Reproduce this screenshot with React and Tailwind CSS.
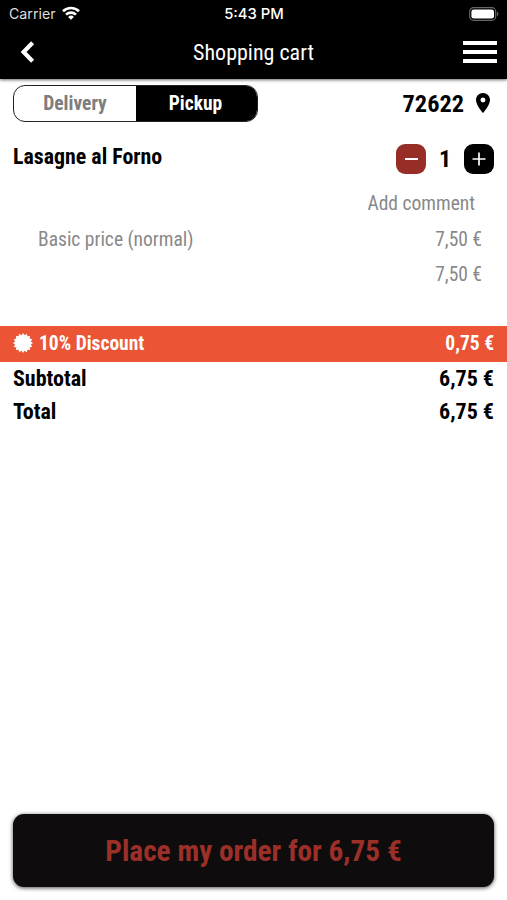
import React from 'react';

const CartScreen = () => {
    return (
        <div className="w-full h-screen bg-white flex flex-col overflow-hidden text-black font-['Roboto_Condensed','Roboto',sans-serif] font-stretch-condensed leading-none">
            {/* HEADER */}
            <header className="h-[79px] shrink-0 bg-black text-white shadow-[0_1px_3px_rgba(0,0,0,0.6)]">
                <StatusBar />
                <div className="h-[48px] grid grid-cols-[1fr_auto_1fr] items-center pl-[20px] pr-[10px]">
                    <svg width="15" height="22" viewBox="0 0 15 22" fill="none" stroke="currentColor" strokeWidth="4.2">
                        <path d="M12.6 1.8 L3.6 11 L12.6 20.2" />
                    </svg>
                    <h1 className="text-[22px] pt-px font-normal -translate-x-[5px]">Shopping cart</h1>
                    <div className="justify-self-end w-[34px] h-[22px] flex flex-col justify-between">
                        <span className="h-[3.6px] bg-white" />
                        <span className="h-[3.6px] bg-white" />
                        <span className="h-[3.6px] bg-white" />
                    </div>
                </div>
            </header>

            {/* ORDER TYPE */}
            <div className="mt-[6px] h-[37px] shrink-0 px-[13px] flex items-center justify-between">
                <div className="w-[245px] h-[37px] flex rounded-[12px] border border-[#222] overflow-hidden text-[19.5px] font-bold">
                    <button className="w-[122px] text-[#7d7d7d]">Delivery</button>
                    <button className="flex-1 pr-[2px] bg-black text-white">Pickup</button>
                </div>
                <div className="flex items-center gap-[12px] pr-[4px]">
                    <span className="pt-[2px] text-[24.3px] font-bold">72622</span>
                    <svg width="14" height="20" viewBox="5 2 14 20" fill="currentColor">
                        <path d="M12 2C8.13 2 5 5.13 5 9c0 5.25 7 13 7 13s7-7.75 7-13c0-3.87-3.13-7-7-7zm0 9.5a2.5 2.5 0 0 1 0-5 2.5 2.5 0 0 1 0 5z" />
                    </svg>
                </div>
            </div>

            {/* CART ITEM */}
            <section className="h-[204px] shrink-0 px-[13px] pt-[21px] text-[19.5px] text-[#888]">
                <div className="h-[31px] flex items-center justify-between text-black font-bold">
                    <h2 className="text-[21.9px] pb-[3px]">Lasagne al Forno</h2>
                    <div className="flex items-center">
                        <button className="size-[30px] rounded-[9px] bg-[#962d26] flex items-center justify-center">
                            <span className="w-[13px] h-[2px] bg-white" />
                        </button>
                        <span className="w-[38px] text-center text-[24px]">1</span>
                        <button className="size-[30px] rounded-[9px] bg-black text-white flex items-center justify-center">
                            <svg width="14" height="14" viewBox="0 0 14 14" stroke="currentColor" strokeWidth="1.7">
                                <path d="M7 0.5V13.5M0.5 7H13.5" />
                            </svg>
                        </button>
                    </div>
                </div>
                <div className="mt-[12px] h-[35px] flex items-center justify-end pr-[19px]">Add comment</div>
                <div className="h-[37px] flex items-center justify-between pl-[25px] pr-[12px]">
                    <span>Basic price (normal)</span>
                    <span>7,50 €</span>
                </div>
                <div className="h-[34px] flex items-center justify-end pr-[12px]">7,50 €</div>
            </section>

            {/* SUMMARY */}
            <div className="h-[36px] shrink-0 bg-[#eb5535] text-white px-[13px] flex items-center justify-between text-[19.5px] font-bold">
                <span className="flex items-center gap-[6px]">
                    <span className="pb-[2px]"><Seal /></span>
                    10% Discount
                </span>
                <span>0,75 €</span>
            </div>
            <SummaryRow label="Subtotal" value="6,75 €" />
            <SummaryRow label="Total" value="6,75 €" />

            <button className="mt-auto mb-[13px] mx-[13px] h-[73px] pt-[2px] shrink-0 rounded-[11px] bg-[#0e0c0d] text-[#9c3029] text-[29.3px] font-bold shadow-[0_1px_4px_rgba(0,0,0,0.7)]">
                Place my order for 6,75 €
            </button>
        </div>
    );
};

const StatusBar = () => (
    <div className="h-[28px] grid grid-cols-[1fr_auto_1fr] items-center pl-[9px] pr-[8px] font-['Inter',sans-serif] font-stretch-normal text-[14px]">
        <div className="flex items-center gap-[6px]">
            <span className="text-[14.2px] text-[#ddd]">Carrier</span>
            <svg className="-mt-[2px]" width="18" height="14" viewBox="0 0 18 14" fill="none" stroke="currentColor" strokeWidth="2.6">
                <path d="M1 5.2a11.6 11.6 0 0 1 16 0" />
                <path d="M4 8.6a7.4 7.4 0 0 1 10 0" />
                <path d="M9 13.8L6.1 10.9a4.2 4.2 0 0 1 5.8 0z" fill="currentColor" stroke="none" />
            </svg>
        </div>
        <span className="text-[14.8px] font-medium">5:43 PM</span>
        <svg className="justify-self-end -mt-px" width="30" height="14" viewBox="0 0 30 14">
            <rect x="0.7" y="0.7" width="26" height="12.6" rx="3.8" fill="none" stroke="#666" strokeWidth="1.2" />
            <rect x="2.4" y="2.4" width="22.6" height="9.2" rx="2.4" fill="#fff" />
            <path d="M28 4.8c1.8.6 1.8 3.8 0 4.4z" fill="#666" />
        </svg>
    </div>
);

// 16-pointed badge next to the discount label
const Seal = () => {
    const points = Array.from({ length: 32 }, (_, i) => {
        const r = i % 2 ? 8 : 10;
        const a = (i * Math.PI) / 16;
        return `${(10 + r * Math.sin(a)).toFixed(2)},${(10 - r * Math.cos(a)).toFixed(2)}`;
    }).join(' ');
    return (
        <svg width="20" height="20" viewBox="0 0 20 20" fill="currentColor">
            <polygon points={points} />
        </svg>
    );
};

const SummaryRow = ({ label, value }) => (
    <div className="h-[33px] shrink-0 px-[13px] flex items-center justify-between text-[22px] font-bold">
        <span>{label}</span>
        <span>{value}</span>
    </div>
);

export default CartScreen;
